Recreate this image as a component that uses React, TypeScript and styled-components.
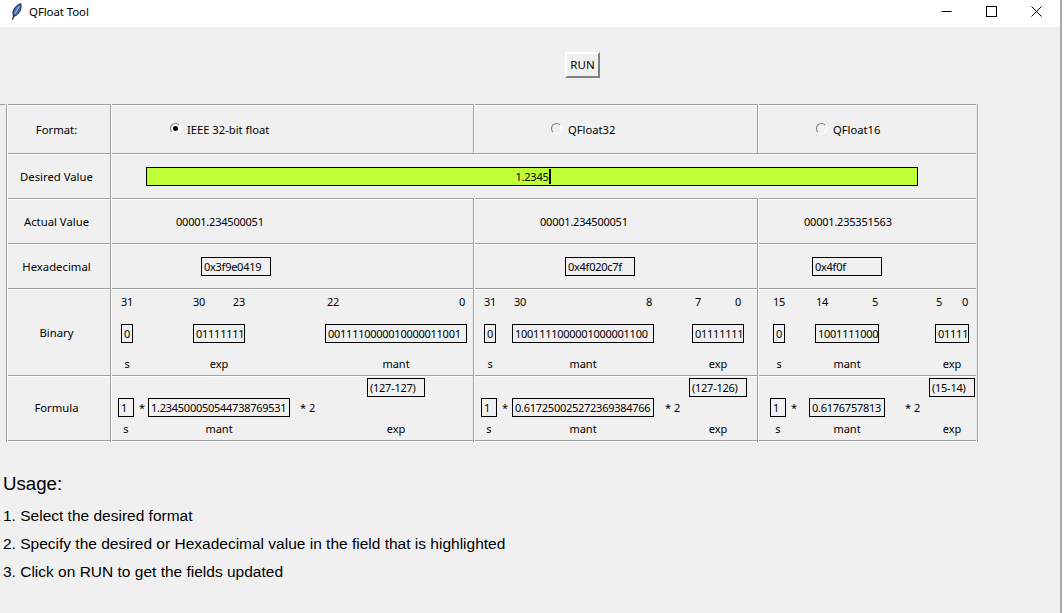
import React from "react";
import styled, { createGlobalStyle } from "styled-components";

const GlobalStyle = createGlobalStyle`
  html, body {
    margin: 0;
    padding: 0;
    background: #fff;
  }
`;

const Screen = styled.div`
  width: 1060px;
  height: 613px;
  border-right: 2px solid #a8a8a8;
  overflow: hidden;
  background: #f0f0f0;
  color: #000;
  font-family: "Noto Sans", "Open Sans", sans-serif;
  font-size: 11px;
`;

const TitleBar = styled.div`
  height: 27px;
  padding-right: 1px;
  background: #fff;
  display: flex;
  align-items: flex-start;
`;

const AppIcon = styled.svg`
  width: 11px;
  height: 17px;
  margin: 3px 7px 0 11px;
`;

const TitleText = styled.div`
  flex: 1;
  line-height: 24px;
  font-size: 11.5px;
  letter-spacing: -0.1px;
`;

const WindowButton = styled.div`
  width: 45px;
  height: 23px;
  display: flex;
  align-items: center;
  justify-content: center;

  svg {
    width: 11px;
    height: 11px;
    stroke: #000;
    fill: none;
  }
`;

const Toolbar = styled.div`
  height: 77px;
  box-sizing: border-box;
  padding: 25px 0 0 565px;
`;

const RunButton = styled.button`
  width: 35px;
  height: 26px;
  box-sizing: border-box;
  padding: 0 0 1px;
  background: #f0f0f0;
  border: 2px solid;
  border-color: #fff #808080 #808080 #fff;
  font: inherit;
  font-size: 11.5px;
  color: #000;
`;

const Table = styled.div`
  position: relative;
  padding-left: 6px;

  &::before {
    content: "";
    position: absolute;
    left: 0;
    top: 0;
    width: 5px;
    height: 1px;
    background: #a0a0a0;
  }
`;

const Row = styled.div<{ $height: number }>`
  width: 973px;
  height: ${(p) => p.$height}px;
  box-sizing: border-box;
  padding-right: 3px;
  display: grid;
  grid-template-columns: 104px 363px 284px 219px;
  box-shadow: inset -1px 0 #fff, inset -2px 0 #a0a0a0;
`;

const Cell = styled.div<{ $inset?: number; $span?: number; $top?: number }>`
  box-sizing: border-box;
  min-width: 0;
  display: flex;
  align-items: center;
  padding-top: ${(p) => p.$top ?? 1}px;
  padding-left: ${(p) => p.$inset ?? 0}px;
  grid-column: span ${(p) => p.$span ?? 1};
  box-shadow: inset 1px 0 #a0a0a0, inset 2px 0 #fff, inset 0 1px #a0a0a0,
    inset 0 2px #fff;
`;

const LabelCell = styled(Cell)`
  justify-content: center;
  padding-right: 3px;
  font-size: 11.3px;
`;

const NumberCell = styled(Cell)`
  letter-spacing: -0.22px;
`;

const ChoiceCell = styled(Cell)`
  font-size: 11.2px;
`;

const RadioMark = styled.span<{ $checked?: boolean }>`
  width: 11px;
  height: 11px;
  box-sizing: border-box;
  margin: -1px 6px 0 0;
  border: 1px solid;
  border-color: #7a7a7a #fff #fff #7a7a7a;
  border-radius: 50%;
  display: flex;
  align-items: center;
  justify-content: center;
  background: ${(p) => (p.$checked ? "#fff" : "#f0f0f0")};

  &::after {
    content: "";
    width: 5px;
    height: 5px;
    border-radius: 50%;
    background: ${(p) => (p.$checked ? "#000" : "transparent")};
  }
`;

const ValueInput = styled.div`
  width: 772px;
  height: 19px;
  margin-left: 36px;
  box-sizing: border-box;
  border: 1px solid #000;
  background: #bfff38;
  text-align: center;
  line-height: 17px;
  letter-spacing: -0.22px;
`;

const Caret = styled.span`
  display: inline-block;
  width: 2px;
  height: 15px;
  margin-right: -2px;
  background: #000;
  vertical-align: -3px;
`;

const Box = styled.div<{ $width?: number }>`
  width: ${(p) => (p.$width ? `${p.$width}px` : "auto")};
  height: 19px;
  box-sizing: border-box;
  border: 1px solid #000;
  padding-left: 2px;
  line-height: 17px;
  letter-spacing: -0.26px;
  white-space: nowrap;
  overflow: hidden;
`;

const BitFields = styled(Cell)`
  align-items: flex-start;
  padding-top: 6px;
`;

const BitField = styled.div<{ $width: number; $left: number; $pad?: number }>`
  width: ${(p) => p.$width}px;
  margin-left: ${(p) => p.$left}px;
  display: grid;
  grid-template-rows: 16px 19px 16px;
  row-gap: 13.5px;
  --pad: ${(p) => p.$pad ?? 0}px;
`;

const BitIndexes = styled.div<{ $single?: boolean }>`
  display: flex;
  justify-content: ${(p) => (p.$single ? "center" : "space-between")};
  padding: 0 var(--pad);
  line-height: 16px;
  letter-spacing: -0.22px;
  white-space: nowrap;
`;

const FieldName = styled.div`
  text-align: center;
  line-height: 16px;
`;

const FormulaGrid = styled(Cell)<{ $columns: string }>`
  display: grid;
  grid-template-columns: ${(p) => p.$columns};
  grid-template-rows: 19px 19px 16px;
  row-gap: 1px;
  align-items: start;
  align-content: start;
  padding-top: 3px;
`;

const Slot = styled.div<{ $col: number; $row: number; $pad?: number }>`
  grid-column: ${(p) => p.$col};
  grid-row: ${(p) => p.$row};
  padding-left: ${(p) => p.$pad ?? 0}px;
  line-height: 19px;
  white-space: nowrap;
`;

const FormulaName = styled(Slot)`
  text-align: center;
  margin-top: 3px;
  line-height: 16px;
`;

const Usage = styled.div`
  margin-top: 28px;
  padding-left: 3px;
  font-family: "Liberation Sans", Arial, sans-serif;
  font-size: 15.5px;
  line-height: 28px;
`;

const UsageTitle = styled.div`
  margin-bottom: 4px;
  font-size: 18.67px;
`;

type Bit = { width: number; left: number; pad?: number; indexes: string[]; value: string; name: string };
type Formula = {
  columns: string;
  inset: number;
  sign: string;
  mant: string;
  exp: string;
  starPad: number;
  timesPad: number;
};

const bitColumns: { fields: Bit[] }[] = [
  {
    fields: [
      { width: 10, left: 11, indexes: ["31"], value: "0", name: "s" },
      { width: 52, left: 62, indexes: ["30", "23"], value: "01111111", name: "exp" },
      { width: 142, left: 80, pad: 2, indexes: ["22", "0"], value: "0011110000010000011001", name: "mant" },
    ],
  },
  {
    fields: [
      { width: 10, left: 11, indexes: ["31"], value: "0", name: "s" },
      { width: 142, left: 18, pad: 2, indexes: ["30", "8"], value: "1001111000001000001100", name: "mant" },
      { width: 52, left: 38, pad: 3, indexes: ["7", "0"], value: "01111111", name: "exp" },
    ],
  },
  {
    fields: [
      { width: 10, left: 16, indexes: ["15"], value: "0", name: "s" },
      { width: 64, left: 32, pad: 1, indexes: ["14", "5"], value: "1001111000", name: "mant" },
      { width: 34, left: 56, pad: 1, indexes: ["5", "0"], value: "01111", name: "exp" },
    ],
  },
];

const formulas: Formula[] = [
  {
    columns: "16px 14px 142px 77px 58px",
    inset: 8,
    sign: "1",
    mant: "1.234500050544738769531",
    exp: "(127-127)",
    starPad: 5,
    timesPad: 10,
  },
  {
    columns: "16px 15px 142px 35px 58px",
    inset: 8,
    sign: "1",
    mant: "0.617250025272369384766",
    exp: "(127-126)",
    starPad: 5,
    timesPad: 11,
  },
  {
    columns: "16px 23px 76px 44px 46px",
    inset: 13,
    sign: "1",
    mant: "0.6176757813",
    exp: "(15-14)",
    starPad: 5,
    timesPad: 20,
  },
];

const FeatherIcon = () => (
  <AppIcon viewBox="0 0 11 17">
    <path d="M2.6 13.5 C0.6 8.5 3.5 2.8 9.8 0.6 C10.8 6 8.6 11.5 2.6 13.5 Z" fill="#3f6fb5" stroke="#141c28" strokeWidth="1" />
    <path d="M8 3.5 L4 10.5" stroke="#b9cfe9" strokeWidth="0.9" />
    <path d="M3 12.5 L1.4 16.8" stroke="#141c28" strokeWidth="1.2" />
  </AppIcon>
);

export default function App() {
  return (
    <Screen>
      <GlobalStyle />
      <TitleBar>
        <FeatherIcon />
        <TitleText>QFloat Tool</TitleText>
        <WindowButton>
          <svg viewBox="0 0 11 11">
            <path d="M0.5 5.5 H10.5" />
          </svg>
        </WindowButton>
        <WindowButton>
          <svg viewBox="0 0 11 11">
            <rect x="0.5" y="0.5" width="10" height="10" />
          </svg>
        </WindowButton>
        <WindowButton>
          <svg viewBox="0 0 11 11">
            <path d="M0.5 0.5 L10.5 10.5 M10.5 0.5 L0.5 10.5" />
          </svg>
        </WindowButton>
      </TitleBar>

      <Toolbar>
        <RunButton>RUN</RunButton>
      </Toolbar>

      <Table>
        <Row $height={49}>
          <LabelCell>Format:</LabelCell>
          <ChoiceCell $inset={60}>
            <RadioMark $checked />
            IEEE 32-bit float
          </ChoiceCell>
          <ChoiceCell $inset={78}>
            <RadioMark />
            QFloat32
          </ChoiceCell>
          <ChoiceCell $inset={59}>
            <RadioMark />
            QFloat16
          </ChoiceCell>
        </Row>

        <Row $height={45}>
          <LabelCell>Desired Value</LabelCell>
          <Cell $span={3}>
            <ValueInput>
              1.2345
              <Caret />
            </ValueInput>
          </Cell>
        </Row>

        <Row $height={45}>
          <LabelCell>Actual Value</LabelCell>
          <NumberCell $inset={66}>00001.234500051</NumberCell>
          <NumberCell $inset={67}>00001.234500051</NumberCell>
          <NumberCell $inset={47}>00001.235351563</NumberCell>
        </Row>

        <Row $height={45}>
          <LabelCell>Hexadecimal</LabelCell>
          <Cell $inset={91}>
            <Box $width={70}>0x3f9e0419</Box>
          </Cell>
          <Cell $inset={92}>
            <Box $width={70}>0x4f020c7f</Box>
          </Cell>
          <Cell $inset={55}>
            <Box $width={70}>0x4f0f</Box>
          </Cell>
        </Row>

        <Row $height={87}>
          <LabelCell>Binary</LabelCell>
          {bitColumns.map((column, i) => (
            <BitFields key={i}>
              {column.fields.map((field) => (
                <BitField key={field.name} $width={field.width} $left={field.left} $pad={field.pad}>
                  <BitIndexes $single={field.indexes.length === 1}>
                    {field.indexes.map((index) => (
                      <span key={index}>{index}</span>
                    ))}
                  </BitIndexes>
                  <Box>{field.value}</Box>
                  <FieldName>{field.name}</FieldName>
                </BitField>
              ))}
            </BitFields>
          ))}
        </Row>

        <Row $height={65}>
          <LabelCell $top={0}>Formula</LabelCell>
          {formulas.map((formula, i) => (
            <FormulaGrid key={i} $inset={formula.inset} $columns={formula.columns}>
              <Slot $col={5} $row={1}>
                <Box>{formula.exp}</Box>
              </Slot>
              <Slot $col={1} $row={2}>
                <Box>{formula.sign}</Box>
              </Slot>
              <Slot $col={2} $row={2} $pad={formula.starPad}>
                *
              </Slot>
              <Slot $col={3} $row={2}>
                <Box>{formula.mant}</Box>
              </Slot>
              <Slot $col={4} $row={2} $pad={formula.timesPad}>
                * 2
              </Slot>
              <FormulaName $col={1} $row={3}>
                s
              </FormulaName>
              <FormulaName $col={3} $row={3}>
                mant
              </FormulaName>
              <FormulaName $col={5} $row={3}>
                exp
              </FormulaName>
            </FormulaGrid>
          ))}
        </Row>

        <Row $height={2}>
          <Cell />
          <Cell />
          <Cell />
          <Cell />
        </Row>
      </Table>

      <Usage>
        <UsageTitle>Usage:</UsageTitle>
        <div>1. Select the desired format</div>
        <div>2. Specify the desired or Hexadecimal value in the field that is highlighted</div>
        <div>3. Click on RUN to get the fields updated</div>
      </Usage>
    </Screen>
  );
}
